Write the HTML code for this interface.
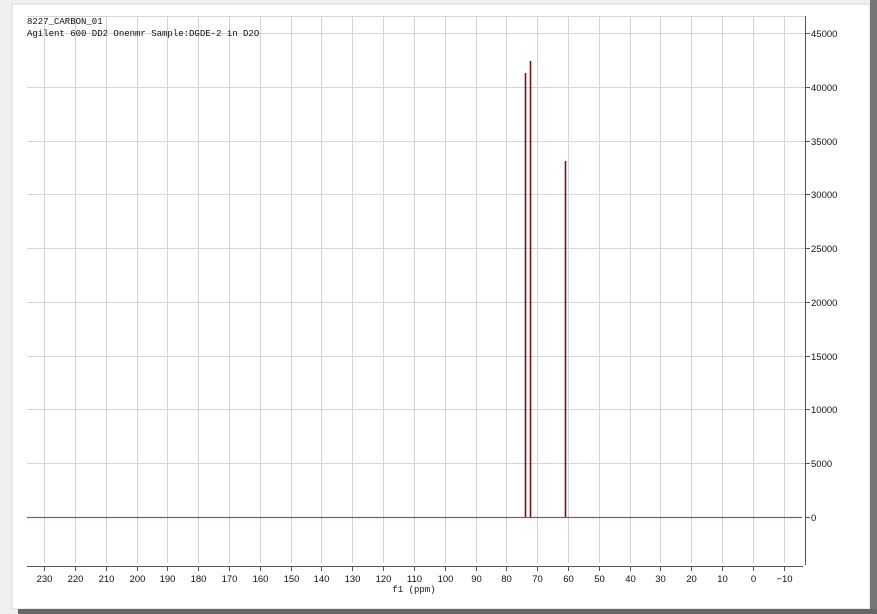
<!DOCTYPE html>
<html><head><meta charset="utf-8"><style>
html,body{margin:0;padding:0;width:877px;height:614px;overflow:hidden;background:#f0f0f0}
svg{position:absolute;left:0;top:0}
text{font-family:"Liberation Mono","DejaVu Sans Mono",monospace;font-size:9px;fill:#111}
.ax{font-family:"Liberation Sans",sans-serif;font-size:9.5px}
</style></head><body>
<svg width="877" height="614" xmlns="http://www.w3.org/2000/svg">
<rect x="0" y="0" width="877" height="614" fill="#f0f0f0"/>
<rect x="12" y="4" width="858" height="605" fill="#fff" stroke="#d8d8d8"/>
<rect x="870" y="0" width="7" height="614" fill="#777"/>
<rect x="18" y="609" width="859" height="5" fill="#666"/>
<g stroke="#d4d4d4" stroke-width="1">
<line x1="27" y1="16.5" x2="805" y2="16.5"/>
<g id="vg"></g>
</g>
<g stroke="#d4d4d4" stroke-width="1">
<line x1="44.5" y1="16" x2="44.5" y2="563"/><line x1="75.5" y1="16" x2="75.5" y2="563"/><line x1="106.5" y1="16" x2="106.5" y2="563"/><line x1="137.5" y1="16" x2="137.5" y2="563"/><line x1="167.5" y1="16" x2="167.5" y2="563"/><line x1="198.5" y1="16" x2="198.5" y2="563"/><line x1="229.5" y1="16" x2="229.5" y2="563"/><line x1="260.5" y1="16" x2="260.5" y2="563"/><line x1="291.5" y1="16" x2="291.5" y2="563"/><line x1="321.5" y1="16" x2="321.5" y2="563"/><line x1="352.5" y1="16" x2="352.5" y2="563"/><line x1="383.5" y1="16" x2="383.5" y2="563"/><line x1="414.5" y1="16" x2="414.5" y2="563"/><line x1="445.5" y1="16" x2="445.5" y2="563"/><line x1="476.5" y1="16" x2="476.5" y2="563"/><line x1="506.5" y1="16" x2="506.5" y2="563"/><line x1="537.5" y1="16" x2="537.5" y2="563"/><line x1="568.5" y1="16" x2="568.5" y2="563"/><line x1="599.5" y1="16" x2="599.5" y2="563"/><line x1="630.5" y1="16" x2="630.5" y2="563"/><line x1="660.5" y1="16" x2="660.5" y2="563"/><line x1="691.5" y1="16" x2="691.5" y2="563"/><line x1="722.5" y1="16" x2="722.5" y2="563"/><line x1="753.5" y1="16" x2="753.5" y2="563"/><line x1="784.5" y1="16" x2="784.5" y2="563"/>
<line x1="27" y1="33.5" x2="805" y2="33.5"/><line x1="27" y1="87.5" x2="805" y2="87.5"/><line x1="27" y1="141.5" x2="805" y2="141.5"/><line x1="27" y1="194.5" x2="805" y2="194.5"/><line x1="27" y1="248.5" x2="805" y2="248.5"/><line x1="27" y1="302.5" x2="805" y2="302.5"/><line x1="27" y1="356.5" x2="805" y2="356.5"/><line x1="27" y1="409.5" x2="805" y2="409.5"/><line x1="27" y1="463.5" x2="805" y2="463.5"/>
</g>
<text x="27" y="24">8227_CARBON_01</text>
<text x="27" y="36">Agilent 600 DD2 Onenmr Sample:DGDE-2 in D2O</text>
<line x1="27" y1="517.5" x2="802" y2="517.5" stroke="#8a5a5a" stroke-width="1.2"/>
<g stroke="#7a1010" stroke-width="1.6">
<line x1="525.5" y1="73" x2="525.5" y2="517"/>
<line x1="530.5" y1="61" x2="530.5" y2="517"/>
<line x1="565.5" y1="161" x2="565.5" y2="517"/>
</g>
<line x1="805.5" y1="16" x2="805.5" y2="565" stroke="#555"/>
<line x1="27" y1="566.5" x2="803" y2="566.5" stroke="#555"/>
<g stroke="#555">
<line x1="805" y1="33.5" x2="810" y2="33.5"/><line x1="805" y1="87.5" x2="810" y2="87.5"/><line x1="805" y1="141.5" x2="810" y2="141.5"/><line x1="805" y1="194.5" x2="810" y2="194.5"/><line x1="805" y1="248.5" x2="810" y2="248.5"/><line x1="805" y1="302.5" x2="810" y2="302.5"/><line x1="805" y1="356.5" x2="810" y2="356.5"/><line x1="805" y1="409.5" x2="810" y2="409.5"/><line x1="805" y1="463.5" x2="810" y2="463.5"/><line x1="805" y1="517.5" x2="810" y2="517.5"/>
<line x1="44.5" y1="566" x2="44.5" y2="571"/><line x1="75.5" y1="566" x2="75.5" y2="571"/><line x1="106.5" y1="566" x2="106.5" y2="571"/><line x1="137.5" y1="566" x2="137.5" y2="571"/><line x1="167.5" y1="566" x2="167.5" y2="571"/><line x1="198.5" y1="566" x2="198.5" y2="571"/><line x1="229.5" y1="566" x2="229.5" y2="571"/><line x1="260.5" y1="566" x2="260.5" y2="571"/><line x1="291.5" y1="566" x2="291.5" y2="571"/><line x1="321.5" y1="566" x2="321.5" y2="571"/><line x1="352.5" y1="566" x2="352.5" y2="571"/><line x1="383.5" y1="566" x2="383.5" y2="571"/><line x1="414.5" y1="566" x2="414.5" y2="571"/><line x1="445.5" y1="566" x2="445.5" y2="571"/><line x1="476.5" y1="566" x2="476.5" y2="571"/><line x1="506.5" y1="566" x2="506.5" y2="571"/><line x1="537.5" y1="566" x2="537.5" y2="571"/><line x1="568.5" y1="566" x2="568.5" y2="571"/><line x1="599.5" y1="566" x2="599.5" y2="571"/><line x1="630.5" y1="566" x2="630.5" y2="571"/><line x1="660.5" y1="566" x2="660.5" y2="571"/><line x1="691.5" y1="566" x2="691.5" y2="571"/><line x1="722.5" y1="566" x2="722.5" y2="571"/><line x1="753.5" y1="566" x2="753.5" y2="571"/><line x1="784.5" y1="566" x2="784.5" y2="571"/>
</g>
<g class="ax" text-anchor="start">
<text class="ax" x="811" y="37">45000</text><text class="ax" x="811" y="91">40000</text><text class="ax" x="811" y="145">35000</text><text class="ax" x="811" y="198">30000</text><text class="ax" x="811" y="252">25000</text><text class="ax" x="811" y="306">20000</text><text class="ax" x="811" y="360">15000</text><text class="ax" x="811" y="413">10000</text><text class="ax" x="811" y="467">5000</text><text class="ax" x="811" y="521">0</text>
</g>
<g text-anchor="middle">
<text class="ax" x="44.5" y="582">230</text><text class="ax" x="75.5" y="582">220</text><text class="ax" x="106.5" y="582">210</text><text class="ax" x="137.5" y="582">200</text><text class="ax" x="167.5" y="582">190</text><text class="ax" x="198.5" y="582">180</text><text class="ax" x="229.5" y="582">170</text><text class="ax" x="260.5" y="582">160</text><text class="ax" x="291.5" y="582">150</text><text class="ax" x="321.5" y="582">140</text><text class="ax" x="352.5" y="582">130</text><text class="ax" x="383.5" y="582">120</text><text class="ax" x="414.5" y="582">110</text><text class="ax" x="445.5" y="582">100</text><text class="ax" x="476.5" y="582">90</text><text class="ax" x="506.5" y="582">80</text><text class="ax" x="537.5" y="582">70</text><text class="ax" x="568.5" y="582">60</text><text class="ax" x="599.5" y="582">50</text><text class="ax" x="630.5" y="582">40</text><text class="ax" x="660.5" y="582">30</text><text class="ax" x="691.5" y="582">20</text><text class="ax" x="722.5" y="582">10</text><text class="ax" x="753.5" y="582">0</text><text class="ax" x="784.5" y="582">−10</text>
<text x="414" y="592">f1 (ppm)</text>
</g>
</svg>
</body></html>
